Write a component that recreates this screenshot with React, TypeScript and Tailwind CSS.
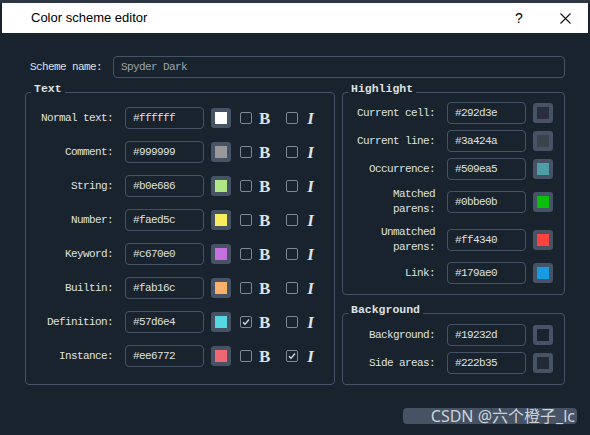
const textRows = [
  { label: 'Normal text:', hex: '#ffffff', bold: false, italic: false },
  { label: 'Comment:', hex: '#999999', bold: false, italic: false },
  { label: 'String:', hex: '#b0e686', bold: false, italic: false },
  { label: 'Number:', hex: '#faed5c', bold: false, italic: false },
  { label: 'Keyword:', hex: '#c670e0', bold: false, italic: false },
  { label: 'Builtin:', hex: '#fab16c', bold: false, italic: false },
  { label: 'Definition:', hex: '#57d6e4', bold: true, italic: false },
  { label: 'Instance:', hex: '#ee6772', bold: false, italic: true },
]

const highlightRows = [
  { label: ['Current cell:'], hex: '#292d3e' },
  { label: ['Current line:'], hex: '#3a424a' },
  { label: ['Occurrence:'], hex: '#509ea5' },
  { label: ['Matched', 'parens:'], hex: '#0bbe0b' },
  { label: ['Unmatched', 'parens:'], hex: '#ff4340' },
  { label: ['Link:'], hex: '#179ae0' },
]

const backgroundRows = [
  { label: ['Background:'], hex: '#19232d' },
  { label: ['Side areas:'], hex: '#222b35' },
]

function Swatch({ color }: { color: string }) {
  return (
    <div className="w-[20px] h-[20px] shrink-0 rounded-[3px] bg-[#455364] flex items-center justify-center">
      <div className="w-[12px] h-[12px]" style={{ backgroundColor: color }} />
    </div>
  )
}

function Check({ on }: { on: boolean }) {
  return (
    <div className="w-[12px] h-[12px] shrink-0 rounded-[2px] border border-[#7d8894] flex items-center justify-center">
      {on && (
        <svg width="8" height="8" viewBox="0 0 8 8">
          <path d="M1 4.2 L3 6.3 L7 1.5" stroke="#dfe1e2" strokeWidth="1.3" fill="none" />
        </svg>
      )}
    </div>
  )
}

function HexInput({ value }: { value: string }) {
  return (
    <div className="w-[79px] h-[22px] shrink-0 rounded-[4px] border border-[#455364] pl-[7px] flex items-center text-[#dfe1e2]">
      {value}
    </div>
  )
}

function GroupTitle({ children }: { children: string }) {
  return (
    <div className="-mt-[11px] ml-[5px] px-[3px] h-[14px] w-fit bg-[#19232d] leading-[14px] font-bold text-[11.5px] tracking-normal text-[#dfe1e2]">
      {children}
    </div>
  )
}

function ColorRow({ label, hex }: { label: string[]; hex: string }) {
  return (
    <div className={`flex items-center ${label.length > 1 ? 'h-[32px]' : 'h-[22px]'}`}>
      <div className="w-[92px] text-right leading-[15px]">
        {label.map((l) => (
          <div key={l}>{l}</div>
        ))}
      </div>
      <div className="ml-[12px]">
        <HexInput value={hex} />
      </div>
      <div className="ml-[7px]">
        <Swatch color={hex} />
      </div>
    </div>
  )
}

export default function App() {
  return (
    <div className="w-[590px] h-[435px] overflow-hidden bg-[#19232d] flex flex-col font-['Liberation_Mono',monospace] text-[11px] tracking-[-0.6px] text-[#dfe1e2]">
      <div className="h-[3px] bg-[#2c3742] shrink-0" />
      <div className="h-[30px] mx-[2px] shrink-0 bg-white flex items-center font-['Liberation_Sans',Arial,sans-serif] text-[13px] tracking-normal text-black">
        <div className="flex-1 pl-[29px]">Color scheme editor</div>
        <div className="w-[20px] text-center text-[14px]">?</div>
        <div className="w-[46px] ml-[13px] flex items-center justify-center">
          <svg width="11" height="11" viewBox="0 0 11 11">
            <path d="M0.5 0.5 L10.5 10.5 M10.5 0.5 L0.5 10.5" stroke="#111" strokeWidth="1.1" />
          </svg>
        </div>
      </div>

      <div className="px-[25px] pt-[23px]">
        <div className="flex items-center h-[22px]">
          <div className="w-[88px] pl-[5px]">Scheme name:</div>
          <div className="flex-1 h-[22px] rounded-[4px] border border-[#455364] pl-[7px] flex items-center text-[#9aa5b0]">
            Spyder Dark
          </div>
        </div>

        <div className="flex gap-[7px] mt-[14px]">
          <div className="w-[310px] border border-[#455364] rounded-[4px]">
            <GroupTitle>Text</GroupTitle>
            <div className="pt-[11px] pb-[17px] flex flex-col gap-[12px]">
              {textRows.map((r) => (
                <div key={r.label} className="flex items-center h-[22px]">
                  <div className="w-[87px] text-right">{r.label}</div>
                  <div className="ml-[12px]">
                    <HexInput value={r.hex} />
                  </div>
                  <div className="ml-[7px]">
                    <Swatch color={r.hex} />
                  </div>
                  <div className="ml-[9px]">
                    <Check on={r.bold} />
                  </div>
                  <span className="ml-[7px] font-['Liberation_Serif',serif] font-bold text-[17px] leading-none tracking-normal">B</span>
                  <div className="ml-[16px]">
                    <Check on={r.italic} />
                  </div>
                  <span className="ml-[9px] font-['Liberation_Serif',serif] font-bold italic text-[17px] leading-none tracking-normal">I</span>
                </div>
              ))}
            </div>
          </div>

          <div className="w-[223px] flex flex-col gap-[18px]">
            <div className="border border-[#455364] rounded-[4px]">
              <GroupTitle>Highlight</GroupTitle>
              <div className="pt-[6px] pb-[10px] flex flex-col gap-[6px]">
                {highlightRows.map((r) => (
                  <ColorRow key={r.hex} label={r.label} hex={r.hex} />
                ))}
              </div>
            </div>
            <div className="border border-[#455364] rounded-[4px]">
              <GroupTitle>Background</GroupTitle>
              <div className="pt-[7px] pb-[10px] flex flex-col gap-[6px]">
                {backgroundRows.map((r) => (
                  <ColorRow key={r.hex} label={r.label} hex={r.hex} />
                ))}
              </div>
            </div>
          </div>
        </div>
      </div>

      <div className="flex justify-end pr-[13px] mt-[23px]">
        <div className="relative w-[174px] h-[16px] rounded-[4px] bg-[#455364] flex">
          <div className="w-[89px] border-r border-[#3b4755]" />
          <div className="absolute right-[2px] -top-[3px] font-['Noto_Sans','Noto_Sans_CJK_SC',sans-serif] text-[16px] leading-[22px] tracking-normal text-[#cfd3d7] whitespace-nowrap">
            CSDN @六个橙子_lc
          </div>
        </div>
      </div>
    </div>
  )
}
